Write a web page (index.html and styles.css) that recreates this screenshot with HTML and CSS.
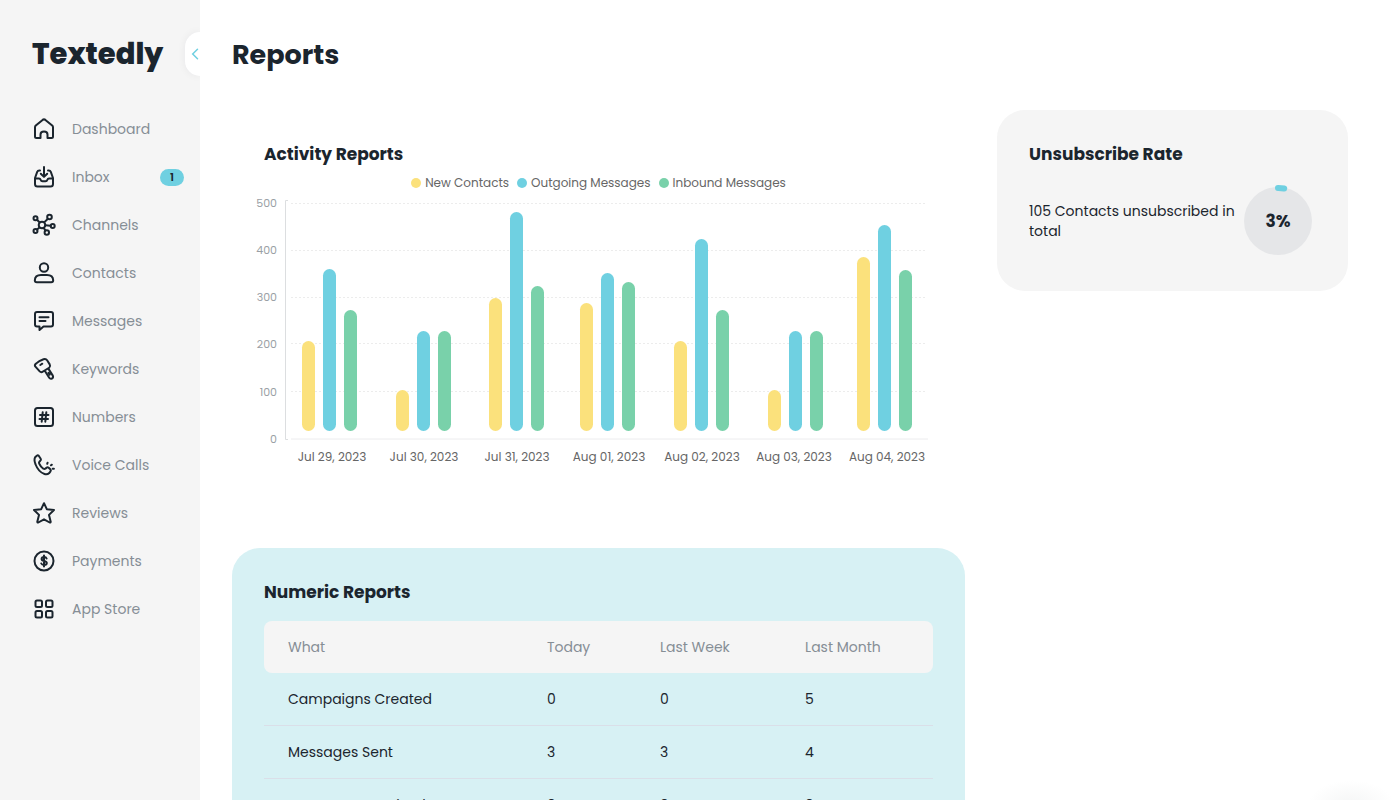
FILE: index.html
```html
<!DOCTYPE html>
<html lang="en">
<head>
<meta charset="utf-8">
<meta name="viewport" content="width=device-width, initial-scale=1">
<title>Reports – Textedly</title>
<link rel="stylesheet" href="styles.css">
</head>
<body>
<div class="app">
  <aside class="sidebar">
    <a class="logo" href="#">Textedly</a>
    <button class="collapse" type="button" aria-label="Collapse menu">
      <svg width="8" height="12" viewBox="0 0 8 12"><path d="M6.500 1.200 1.700 6l4.800 4.800"/></svg>
    </button>
    <nav class="nav">
      <a class="nav-item" href="#"><svg class="icon" viewBox="0 0 24 24"><path d="M3 10.300Q3 9.300 3.800 8.600L10.600 2.900Q12 1.800 13.400 2.900L20.200 8.600Q21 9.300 21 10.300V19.500Q21 21 19.500 21H15.500V17.500Q15.500 14.500 12 14.500T8.500 17.500V21H4.500Q3 21 3 19.500Z"/></svg><span>Dashboard</span></a>
      <a class="nav-item" href="#"><svg class="icon" viewBox="0 0 24 24"><path d="M12 2v9.500M8.800 8.700l3.200 3.200 3.200-3.200M8 5.500H7.200Q5.700 5.500 5.200 6.800L3 13v6q0 2.500 2.500 2.500h13Q21 21.500 21 19v-6l-2.200-6.200Q18.300 5.500 16.800 5.500H16M3 13.500h4q1.200 0 1.600 1.200.5 1.500 1.900 1.500h3q1.400 0 1.900-1.500.4-1.200 1.600-1.200h4"/></svg><span>Inbox</span><span class="badge">1</span></a>
      <a class="nav-item" href="#"><svg class="icon" viewBox="0 0 24 24"><circle cx="10" cy="12" r="3.300"/><circle cx="3.500" cy="5.300" r="2"/><circle cx="17.500" cy="4" r="2.300"/><circle cx="20.700" cy="13" r="2"/><circle cx="3.500" cy="18" r="2"/><circle cx="14.800" cy="19.500" r="2.200"/><path d="M5 6.800l2.700 2.700M12.200 9.400l3.700-3.600M13.300 12.300l5.300.5M7.500 14.400l-2.500 2.100M11.700 14.900l1.800 2.700"/></svg><span>Channels</span></a>
      <a class="nav-item" href="#"><svg class="icon" viewBox="0 0 24 24"><circle cx="12" cy="6.500" r="4.200"/><path d="M9 14h6q6 0 6.200 5.200 0 2-2 2H4.800q-2 0-2-2Q3 14 9 14Z"/></svg><span>Contacts</span></a>
      <a class="nav-item" href="#"><svg class="icon" viewBox="0 0 24 24"><path d="M5 3h14q2 0 2 2v10.500q0 2-2 2h-7.500L7.500 21v-3.500H5q-2 0-2-2V5q0-2 2-2ZM7.500 8.300h9M7.500 12h6"/></svg><span>Messages</span></a>
      <a class="nav-item" href="#"><svg class="icon" viewBox="0 0 24 24"><path d="M4 6.600Q7 3.700 11.500 2.200q2.400-.8 3.600 1l2.600 4.200q1 1.700-.3 3l-1.200 1 4.600 7.200q.8 2-.9 3-1.800.6-2.700-.8l-4.600-7.300-2.600 1.600q-1.300.3-2.300-.7L3.200 9.400q-.9-1.500.8-2.800ZM8.300 8l2-1.300M12.600 13.500l3.600-2.100M16.500 15.800l1.200 1.800"/></svg><span>Keywords</span></a>
      <a class="nav-item" href="#"><svg class="icon" viewBox="0 0 24 24"><rect x="3" y="3" width="18" height="18" rx="2.500"/><path d="M8 10h8.500M7.500 14H16M10.700 7.300l-1 9.400M14.300 7.300l-1 9.400"/></svg><span>Numbers</span></a>
      <a class="nav-item" href="#"><svg class="icon" viewBox="0 0 24 24"><path d="M3.100 4.300 4.800 2.700q1-.8 1.900.1l2 2.900q.7 1.200-.4 2.100l-.9.900q-.7.800-.2 2 1.300 3 4.100 5 1.300.6 2.100-.1l1.300-1q1-.6 2 .1l1.600 1.600q1 1 .2 2l-1.500 2q-1.800 1.600-4.500.7Q6.500 19 3.600 11.500 1.700 7 3.100 4.300Z"/><path d="M15.200 10.800l.4-1.100M18.900 12.300l1-.6M20.700 15.700h1.200"/></svg><span>Voice Calls</span></a>
      <a class="nav-item" href="#"><svg class="icon" viewBox="0 0 24 24"><path d="m12 2.200 2.800 6 7.200.8-5 4.900 1.700 6.800q.1 1-1 .8L12 18.300l-5.700 3.200q-1.100.2-1-.8L7 13.900 2 9l7.200-.8Z"/></svg><span>Reviews</span></a>
      <a class="nav-item" href="#"><svg class="icon" viewBox="0 0 24 24"><circle cx="12" cy="12" r="9.500"/><path d="M14.600 9.500q-.5-1.400-2.500-1.400-2.500 0-2.500 1.900 0 1.500 2.500 2 2.700.6 2.700 2.100 0 1.900-2.700 1.900-2.200 0-2.800-1.500M12 6.500v11"/></svg><span>Payments</span></a>
      <a class="nav-item" href="#"><svg class="icon" viewBox="0 0 24 24"><rect x="3.500" y="3.500" width="6.500" height="6.500" rx="1.500"/><rect x="14" y="3.500" width="6.500" height="6.500" rx="1.500"/><rect x="3.500" y="14" width="6.500" height="6.500" rx="1.500"/><rect x="14" y="14" width="6.500" height="6.500" rx="1.500"/></svg><span>App Store</span></a>
    </nav>
  </aside>

  <main class="main">
    <h1 class="page-title">Reports</h1>
    <div class="columns">
      <div class="column">
        <section class="activity">
          <h2 class="card-title">Activity Reports</h2>
          <ul class="legend">
            <li class="legend-item"><span class="dot dot-new"></span>New Contacts</li>
            <li class="legend-item"><span class="dot dot-out"></span>Outgoing Messages</li>
            <li class="legend-item"><span class="dot dot-in"></span>Inbound Messages</li>
          </ul>
          <svg class="chart" viewBox="0 0 685 272" role="img" aria-label="Contacts and messages per day">
            <g class="gridlines">
              <path d="M35 7.500H671M35 54.500H671M35 101.500H671M35 147.500H671M35 195.500H671"/>
            </g>
            <path class="axis-y" d="M32 4.500H29.500V243.500H32"/>
            <path class="axis-x" d="M35 243H672"/>
            <g class="ticks">
              <text x="21" y="11">500</text>
              <text x="21" y="58">400</text>
              <text x="21" y="105">300</text>
              <text x="21" y="152">200</text>
              <text x="21" y="200">100</text>
              <text x="21" y="247">0</text>
            </g>
            <g class="bars-new">
              <rect x="46" y="145" width="13" height="90" rx="6.500"/>
              <rect x="140" y="194" width="13" height="41" rx="6.500"/>
              <rect x="233" y="102" width="13" height="133" rx="6.500"/>
              <rect x="324" y="107" width="13" height="128" rx="6.500"/>
              <rect x="418" y="145" width="13" height="90" rx="6.500"/>
              <rect x="512" y="194" width="13" height="41" rx="6.500"/>
              <rect x="601" y="61" width="13" height="174" rx="6.500"/>
            </g>
            <g class="bars-out">
              <rect x="67" y="73" width="13" height="162" rx="6.500"/>
              <rect x="161" y="135" width="13" height="100" rx="6.500"/>
              <rect x="254" y="16" width="13" height="219" rx="6.500"/>
              <rect x="345" y="77" width="13" height="158" rx="6.500"/>
              <rect x="439" y="43" width="13" height="192" rx="6.500"/>
              <rect x="533" y="135" width="13" height="100" rx="6.500"/>
              <rect x="622" y="29" width="13" height="206" rx="6.500"/>
            </g>
            <g class="bars-in">
              <rect x="88" y="114" width="13" height="121" rx="6.500"/>
              <rect x="182" y="135" width="13" height="100" rx="6.500"/>
              <rect x="275" y="90" width="13" height="145" rx="6.500"/>
              <rect x="366" y="86" width="13" height="149" rx="6.500"/>
              <rect x="460" y="114" width="13" height="121" rx="6.500"/>
              <rect x="554" y="135" width="13" height="100" rx="6.500"/>
              <rect x="643" y="74" width="13" height="161" rx="6.500"/>
            </g>
            <g class="dates">
              <text x="76" y="265">Jul 29, 2023</text>
              <text x="168" y="265">Jul 30, 2023</text>
              <text x="261" y="265">Jul 31, 2023</text>
              <text x="353" y="265">Aug 01, 2023</text>
              <text x="446" y="265">Aug 02, 2023</text>
              <text x="538" y="265">Aug 03, 2023</text>
              <text x="631" y="265">Aug 04, 2023</text>
            </g>
          </svg>
        </section>

        <section class="numeric">
          <h2 class="card-title">Numeric Reports</h2>
          <table class="table">
            <thead>
              <tr><th class="col-what">What</th><th class="col-today">Today</th><th class="col-week">Last Week</th><th>Last Month</th></tr>
            </thead>
            <tbody>
              <tr><td>Campaigns Created</td><td>0</td><td>0</td><td>5</td></tr>
              <tr><td>Messages Sent</td><td>3</td><td>3</td><td>4</td></tr>
              <tr><td>Messages Received</td><td>0</td><td>0</td><td>0</td></tr>
            </tbody>
          </table>
        </section>
      </div>

      <section class="rate">
        <h2 class="card-title">Unsubscribe Rate</h2>
        <div class="rate-row">
          <p class="rate-text">105 Contacts unsubscribed in total</p>
          <div class="ring">
            <svg class="ring-art" viewBox="0 0 76 76"><circle class="ring-disc" cx="38" cy="38" r="34"/><path class="ring-arc" d="M38 5a33 33 0 0 1 6.200.5"/></svg>
            <strong class="ring-value">3%</strong>
          </div>
        </div>
      </section>
    </div>
  </main>
  <div class="glow"></div>
</div>
</body>
</html>
```

FILE: styles.css
```css
* { box-sizing: border-box; }

body {
  margin: 0;
  background: #fff;
  color: #1b252e;
  font-family: Poppins, Inter, "Liberation Sans", sans-serif;
  font-size: 14px;
  line-height: 20px;
}

h1, h2, p, ul { margin: 0; padding: 0; }

.app {
  position: relative;
  display: flex;
  height: 100vh;
  overflow: hidden;
}

/* Sidebar */
.sidebar {
  position: relative;
  flex: 0 0 200px;
  display: flex;
  flex-direction: column;
  gap: 29px;
  padding-top: 32px;
  background: #f5f5f5;
  overflow: hidden;
}

.logo {
  padding-left: 32px;
  color: #1b252e;
  font-size: 29px;
  font-weight: 800;
  line-height: 44px;
  text-decoration: none;
}

.collapse {
  position: absolute;
  top: 32px;
  right: 0;
  display: flex;
  align-items: center;
  justify-content: flex-end;
  width: 15px;
  height: 44px;
  padding: 0 1px 0 0;
  border: 0;
  border-radius: 15px 0 0 15px;
  background: #fff;
  box-shadow: 0 0 8px rgba(27, 37, 46, 0.06);
}

.collapse path {
  fill: none;
  stroke: #6fd0e1;
  stroke-width: 1.5;
  stroke-linecap: round;
}

.nav { display: flex; flex-direction: column; }

.nav-item {
  display: flex;
  align-items: center;
  gap: 16px;
  height: 48px;
  padding: 0 16px 0 32px;
  color: #868e95;
  text-decoration: none;
}

.icon {
  width: 24px;
  height: 24px;
  fill: none;
  stroke: #1b252e;
  stroke-width: 2;
  stroke-linecap: round;
  stroke-linejoin: round;
}

.badge {
  width: 24px;
  margin-left: auto;
  border-radius: 9px;
  background: #6fd0e1;
  color: #1b252e;
  font-size: 11px;
  font-weight: 600;
  line-height: 17px;
  text-align: center;
}

/* Content */
.main {
  flex: 1;
  min-width: 0;
  padding: 32px 46px 32px 32px;
  overflow-y: auto;
  scrollbar-width: none;
}

.page-title {
  margin-bottom: 32px;
  font-size: 27px;
  font-weight: 700;
  line-height: 46px;
}

.columns {
  display: grid;
  grid-template-columns: minmax(0, 733fr) minmax(0, 351fr);
  align-items: start;
  gap: 32px;
}

.column { display: flex; flex-direction: column; gap: 32px; }

.card-title {
  font-size: 17px;
  font-weight: 700;
  line-height: 24px;
}

/* Activity chart */
.activity { padding: 32px 24px 48px; }
.activity .card-title { padding-left: 8px; }

.legend {
  display: flex;
  justify-content: center;
  gap: 8px;
  padding: 7px 0 3px;
  color: #666;
  font-size: 12px;
  list-style: none;
}

.legend-item { display: flex; align-items: center; gap: 4px; }
.dot { width: 10px; height: 10px; border-radius: 50%; }
.dot-new { background: #fbe17c; }
.dot-out { background: #6fd0e1; }
.dot-in { background: #79d1aa; }

.chart { display: block; width: 100%; }
.gridlines { fill: none; stroke: #ececec; stroke-dasharray: 2 2; }
.axis-y { fill: none; stroke: #dcdee0; }
.axis-x { fill: none; stroke: #ececee; }
.bars-new { fill: #fbe17c; }
.bars-out { fill: #6fd0e1; }
.bars-in { fill: #79d1aa; }
.ticks { fill: #9a9fa5; font-size: 11px; text-anchor: end; }
.dates { fill: #666; font-size: 12px; text-anchor: middle; }

/* Numeric table */
.numeric {
  padding: 32px;
  border-radius: 28px;
  background: #d7f1f4;
}

.table {
  width: 100%;
  margin-top: 17px;
  border-spacing: 0;
  table-layout: fixed;
}

.table th, .table td { padding: 0 0 0 24px; text-align: left; }

.table th {
  height: 52px;
  background: #f5f5f5;
  color: #868e95;
  font-weight: 400;
}

.table th:first-child { border-radius: 8px 0 0 8px; }
.table th:last-child { border-radius: 0 8px 8px 0; }
.table td { height: 53px; border-bottom: 1px solid #dadfe8; }
.col-what { width: 38.7%; }
.col-today { width: 16.9%; }
.col-week { width: 21.7%; }

/* Unsubscribe rate */
.rate {
  padding: 32px;
  border-radius: 28px;
  background: #f5f5f5;
}

.rate-row {
  display: flex;
  align-items: center;
  justify-content: space-between;
  margin-top: 17px;
}

.ring {
  flex: 0 0 76px;
  display: grid;
  place-items: center;
}

.ring-art, .ring-value { grid-area: 1 / 1; }
.ring-art { width: 76px; height: 76px; }
.ring-disc { fill: #e5e6e8; }
.ring-arc { fill: none; stroke: #6fd0e1; stroke-width: 6; stroke-linecap: round; }
.ring-value { font-size: 17px; font-weight: 700; }

.glow {
  position: absolute;
  right: 0;
  bottom: 0;
  width: 86px;
  height: 20px;
  background: radial-gradient(ellipse at 50% 120%, #f5f6f6, #fff 70%);
  pointer-events: none;
}
```
